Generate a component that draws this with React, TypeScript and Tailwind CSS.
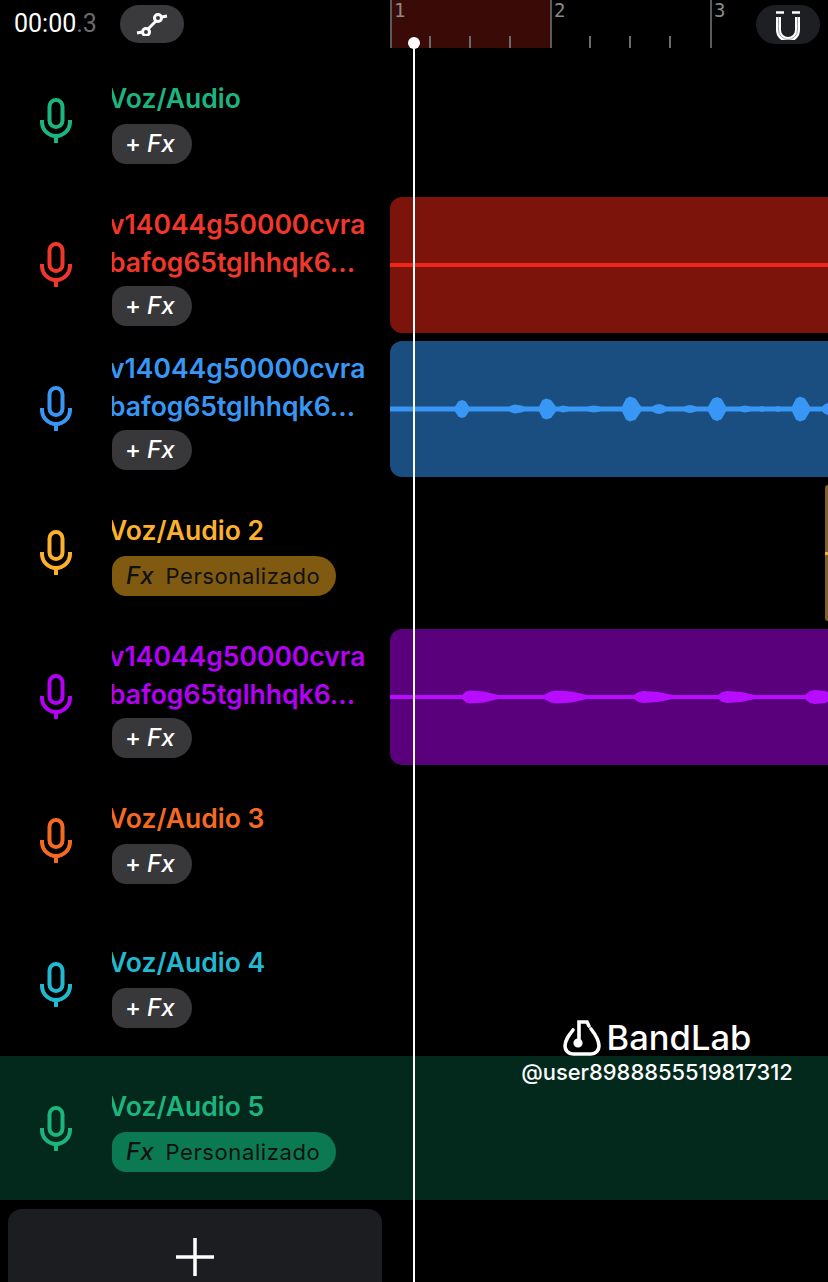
const trackFont = { fontFamily: '"Inter", "Noto Sans", sans-serif' };

function Mic({ className }: { className: string }) {
  return (
    <svg viewBox="0 0 34 46" className={`h-[46px] w-[34px] ${className}`} fill="none" stroke="currentColor" strokeWidth="4">
      <rect x="10.5" y="3" width="13" height="27" rx="6.5" />
      <path d="M3 23v2a14 14 0 0 0 28 0v-2" />
      <path d="M17 39v7" />
    </svg>
  );
}

function FxPill({ custom, color }: { custom?: boolean; color?: string }) {
  if (custom) {
    return (
      <div className={`flex h-10 w-56 items-center gap-3 rounded-l-[14px] rounded-r-[20px] pl-[14px] text-[#111] ${color}`}>
        <span className="text-[24px] font-medium italic">Fx</span>
        <span className="text-[22px] tracking-[0.6px]">Personalizado</span>
      </div>
    );
  }
  return (
    <div className="flex h-10 w-20 items-center gap-[6px] rounded-l-[14px] rounded-r-[20px] bg-[#38383a] pl-[13px] text-[24px] font-medium text-white">
      <span>+</span>
      <span className="italic">Fx</span>
    </div>
  );
}

interface TrackProps {
  color: string;
  title?: string;
  long?: boolean;
  pill?: string;
  bg?: string;
  clip?: React.ReactNode;
}

function Track({ color, title, long, pill, bg, clip }: TrackProps) {
  return (
    <div className={`flex h-36 ${bg ?? ''}`}>
      <div className="flex w-[390px] shrink-0">
        <div className="flex w-[112px] shrink-0 items-center justify-center">
          <Mic className={color} />
        </div>
        <div className="flex w-[256px] flex-col justify-center overflow-hidden">
          {long ? (
            <div className={`-ml-[3px] mb-[5px] pt-[3px] text-[26.5px] font-semibold leading-[38px] whitespace-nowrap ${color}`}>
              <div>v14044g50000cvra</div>
              <div>bafog65tglhhqk6...</div>
            </div>
          ) : (
            <div className={`-ml-[4px] mb-2 pt-1 text-[26.5px] font-semibold leading-[36px] whitespace-nowrap ${color}`}>{title}</div>
          )}
          <FxPill custom={!!pill} color={pill} />
        </div>
      </div>
      <div className="min-w-0 flex-1">{clip}</div>
    </div>
  );
}

function Clip({ className, children }: { className: string; children?: React.ReactNode }) {
  return <div className={`mt-[5px] h-[136px] overflow-hidden rounded-l-[12px] ${className}`}>{children}</div>;
}

// at = peak position, l/r = how far it spreads each side, h = half height
type Peak = { at: number; l: number; r: number; h: number };

function wavePath(peaks: Peak[], thick: number) {
  const mid = 68;
  const top = peaks
    .map((p) => `L${p.at - p.l} ${mid - thick}L${p.at - p.l * 0.5} ${mid - p.h * 0.85}L${p.at} ${mid - p.h}L${p.at + p.r * 0.5} ${mid - p.h * 0.85}L${p.at + p.r} ${mid - thick}`)
    .join('');
  const bottom = [...peaks]
    .reverse()
    .map((p) => `L${p.at + p.r} ${mid + thick}L${p.at + p.r * 0.5} ${mid + p.h * 0.85}L${p.at} ${mid + p.h}L${p.at - p.l * 0.5} ${mid + p.h * 0.85}L${p.at - p.l} ${mid + thick}`)
    .join('');
  return `M0 ${mid - thick}${top}L438 ${mid - thick}L438 ${mid + thick}${bottom}L0 ${mid + thick}Z`;
}

function Wave({ color, peaks, thick }: { color: string; peaks: Peak[]; thick: number }) {
  return (
    <svg viewBox="0 0 438 136" className="h-[136px] w-[438px]" fill="currentColor" style={{ color }}>
      <path d={wavePath(peaks, thick)} />
    </svg>
  );
}

const bluePeaks: Peak[] = [
  { at: 72, l: 7, r: 7, h: 9 },
  { at: 125, l: 6, r: 10, h: 4.5 },
  { at: 156, l: 7, r: 10, h: 10.5 },
  { at: 173, l: 4, r: 6, h: 3.5 },
  { at: 204, l: 7, r: 7, h: 3.5 },
  { at: 240, l: 8, r: 11, h: 12.5 },
  { at: 269, l: 7, r: 7, h: 5 },
  { at: 300, l: 6, r: 6, h: 4 },
  { at: 327, l: 9, r: 9, h: 12 },
  { at: 355, l: 5, r: 6, h: 3.5 },
  { at: 372, l: 5, r: 5, h: 3 },
  { at: 388, l: 5, r: 5, h: 3 },
  { at: 410, l: 8, r: 10, h: 12.5 },
  { at: 438, l: 6, r: 4, h: 6 },
];

const purplePeaks: Peak[] = [
  { at: 80, l: 8, r: 28, h: 6.5 },
  { at: 167, l: 13, r: 30, h: 6.5 },
  { at: 253, l: 9, r: 30, h: 6 },
  { at: 337, l: 9, r: 28, h: 6 },
  { at: 425, l: 10, r: 20, h: 7 },
];

function Ruler() {
  const bars = [
    { label: '1', style: 'w-40 bg-[#3a0a07]' },
    { label: '2', style: 'w-40' },
    { label: '3', style: 'w-[118px]' },
  ];
  return (
    <div className="flex h-full">
      {bars.map((bar) => (
        <div key={bar.label} className={`relative h-full border-l-2 border-[#5a5a5a] ${bar.style}`}>
          <span className="absolute left-[2px] top-0 text-[19px] leading-5 text-[#8a8a8a]" style={{ fontFamily: '"DejaVu Sans Mono", monospace' }}>
            {bar.label}
          </span>
          {bar.label !== '3' && (
            <div className="absolute bottom-0 left-[37px] flex gap-[38px]">
              <div className="h-3 w-0.5 bg-[#6b6b6b]" />
              <div className="h-3 w-0.5 bg-[#6b6b6b]" />
              <div className="h-3 w-0.5 bg-[#6b6b6b]" />
            </div>
          )}
        </div>
      ))}
    </div>
  );
}

export default function App() {
  return (
    <div className="relative h-[1282px] w-[828px] overflow-hidden bg-black" style={trackFont}>
      {/* Top bar */}
      <div className="flex h-12">
        <div className="flex w-[390px] shrink-0 items-center pl-[14px]">
          <div className="w-[106px] text-[25px] text-white" style={{ fontFamily: '"Roboto", sans-serif' }}>
            00:00<span className="text-[#6b6b6b]">.3</span>
          </div>
          <div className="flex h-[38px] w-16 items-center justify-center rounded-[19px] bg-[#3a3a3c]">
            <svg viewBox="0 0 32 24" className="h-6 w-8" fill="none" stroke="white" strokeWidth="3">
              <circle cx="10" cy="20" r="3.5" />
              <circle cx="22" cy="6" r="3.5" />
              <path d="M12 17l8-8M1 21l5-1M26 5l5-1" />
            </svg>
          </div>
        </div>
        <div className="relative flex-1">
          <Ruler />
          <div className="absolute right-2 top-[5px] flex h-[39px] w-16 items-center justify-center rounded-[20px] bg-[#1d1f23]">
            <svg viewBox="0 0 28 30" className="h-[30px] w-7" fill="none" stroke="white" strokeWidth="5">
              <path d="M2 2.5h8M18 2.5h8" strokeWidth="2.4" />
              <path d="M4.5 7v13a9.5 9.5 0 0 0 19 0V7" />
              <path d="M4.5 7v13a9.5 9.5 0 0 0 19 0V7" stroke="#8a8a8a" strokeWidth="0.8" />
            </svg>
          </div>
        </div>
      </div>

      <Track color="text-[#1db57f]" title="Voz/Audio" />
      <Track
        color="text-[#f0372b]"
        long
        clip={
          <Clip className="bg-[#7c140c]">
            <div className="mt-[66px] h-1 bg-[#f0261c]" />
          </Clip>
        }
      />
      <Track
        color="text-[#3897f5]"
        long
        clip={
          <Clip className="bg-[#1a4d80]">
            <Wave color="#3897f5" peaks={bluePeaks} thick={2.5} />
          </Clip>
        }
      />
      <Track
        color="text-[#fdb02d]"
        title="Voz/Audio 2"
        pill="bg-[#7f5a10]"
        clip={
          <div className="flex h-full justify-end pt-[5px]">
            <div className="flex h-[136px] w-[3px] flex-col justify-center rounded-l-[3px] bg-[#806024]">
              <div className="h-[3px] bg-[#fdb02d]" />
            </div>
          </div>
        }
      />
      <Track
        color="text-[#b400f5]"
        long
        clip={
          <Clip className="bg-[#5a007d]">
            <Wave color="#b70cff" peaks={purplePeaks} thick={2} />
          </Clip>
        }
      />
      <Track color="text-[#f56a22]" title="Voz/Audio 3" />
      <Track color="text-[#22b8cf]" title="Voz/Audio 4" />
      <Track color="text-[#1db57f]" title="Voz/Audio 5" pill="bg-[#0b7a53]" bg="bg-[#03291c]" />

      {/* Add track */}
      <div className="ml-2 mt-[9px] flex h-20 w-[374px] items-start justify-center rounded-t-[14px] bg-[#1b1d21] pt-[29px]">
        <svg viewBox="0 0 38 38" className="h-[38px] w-[38px]" stroke="white" strokeWidth="3.5">
          <path d="M19 0v38M0 19h38" />
        </svg>
      </div>

      {/* Playhead */}
      <div className="absolute bottom-0 left-[413px] top-[42px] w-0.5 bg-white" />
      <div className="absolute left-[408px] top-[37px] h-3 w-3 rounded-full bg-white" />

      {/* Watermark */}
      <div className="absolute left-[522px] top-[1018px] flex w-[270px] flex-col items-center text-white">
        <div className="flex h-10 items-center gap-[6px]">
          <svg viewBox="0 0 38 38" className="h-[38px] w-[38px]" fill="none" stroke="white" strokeWidth="3.6" strokeLinecap="round">
            <path d="M10 11C6 16 2 21 2 27a8 8 0 0 0 8 8h18a8 8 0 0 0 8-8c0-6-4-12-8-17" />
            <path d="M16 24V3h8l2 4" />
            <circle cx="15" cy="24" r="2.8" fill="white" />
          </svg>
          <span className="text-[34.5px] font-medium leading-10">BandLab</span>
        </div>
        <div className="text-[21.9px] font-medium leading-7 whitespace-nowrap">@user8988855519817312</div>
      </div>
    </div>
  );
}
